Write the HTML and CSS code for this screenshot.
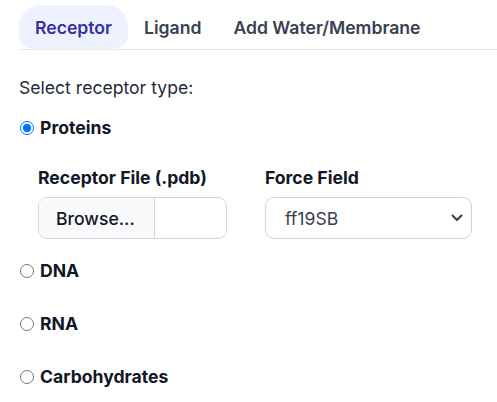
FILE: index.html
```html
<!DOCTYPE html>
<html>
<head>
<meta charset="utf-8">
<link rel="stylesheet" href="styles.css">
</head>
<body>
<div class="panel">
  <nav class="tabs">
    <button class="tab active">Receptor</button>
    <button class="tab">Ligand</button>
    <button class="tab">Add Water/Membrane</button>
  </nav>
  <div class="content">
    <p class="prompt">Select receptor type:</p>
    <label class="radio-row first"><input type="radio" name="rt" checked><span>Proteins</span></label>
    <div class="fields">
      <div class="field file-field">
        <div class="field-label">Receptor File (.pdb)</div>
        <div class="file-input"><span class="file-btn">Browse...</span><span class="file-name"></span></div>
      </div>
      <div class="field select-field">
        <div class="field-label">Force Field</div>
        <div class="select">
          <span>ff19SB</span>
          <svg width="12" height="8" viewBox="0 0 12 8"><path d="M1.5 1.5 L6 6 L10.5 1.5" fill="none" stroke="#374151" stroke-width="2" stroke-linecap="round" stroke-linejoin="round"/></svg>
        </div>
      </div>
    </div>
    <label class="radio-row"><input type="radio" name="rt"><span>DNA</span></label>
    <label class="radio-row"><input type="radio" name="rt"><span>RNA</span></label>
    <label class="radio-row"><input type="radio" name="rt"><span>Carbohydrates</span></label>
  </div>
</div>
</body>
</html>
```
FILE: styles.css
```css
* { box-sizing: border-box; }
body {
  margin: 0;
  background: #ffffff;
  font-family: Inter, "Liberation Sans", sans-serif;
  color: #111827;
}
.panel {
  padding: 5px 0 0 19px;
}
.tabs {
  display: flex;
  border-bottom: 1px solid #e5e7eb;
}
.tab {
  font-family: inherit;
  font-size: 17.6px;
  font-weight: 600;
  color: #374151;
  background: transparent;
  border: none;
  height: 44px;
  padding: 0 16px;
  cursor: pointer;
}
.tab.active {
  background: #eef2ff;
  color: #3730a3;
  border-radius: 22px 22px 14px 14px;
}
.content {
  padding-top: 25px;
}
.prompt {
  margin: 0 0 14px 0;
  font-size: 17.6px;
  line-height: 26px;
  color: #1f2937;
}
.radio-row {
  display: flex;
  align-items: center;
  font-size: 17.6px;
  font-weight: 700;
  line-height: 26px;
  height: 26px;
  margin-bottom: 27px;
}
.radio-row.first {
  margin-bottom: 24px;
}
.radio-row input {
  margin: 0 6px 0 1px;
  width: 14px;
  height: 14px;
}
.fields {
  display: flex;
  gap: 38px;
  padding-left: 19px;
  margin-bottom: 19px;
}
.field {
  display: flex;
  flex-direction: column;
}
.file-field { width: 189px; }
.select-field { width: 207px; }
.field-label {
  font-size: 17.6px;
  font-weight: 700;
  line-height: 26px;
  margin-bottom: 6px;
}
.file-input {
  display: flex;
  height: 42px;
  border: 1px solid #d1d5db;
  border-radius: 9px;
  overflow: hidden;
}
.file-btn {
  display: flex;
  align-items: center;
  padding: 0 17px;
  background: #f9fafb;
  border-right: 1px solid #d1d5db;
  font-size: 17.6px;
  font-weight: 500;
  color: #111827;
  width: 116px;
}
.file-name { flex: 1; }
.select {
  display: flex;
  align-items: center;
  justify-content: space-between;
  height: 42px;
  border: 1px solid #d1d5db;
  border-radius: 9px;
  padding: 0 8px 0 19px;
  font-size: 17.6px;
  color: #374151;
}
```
